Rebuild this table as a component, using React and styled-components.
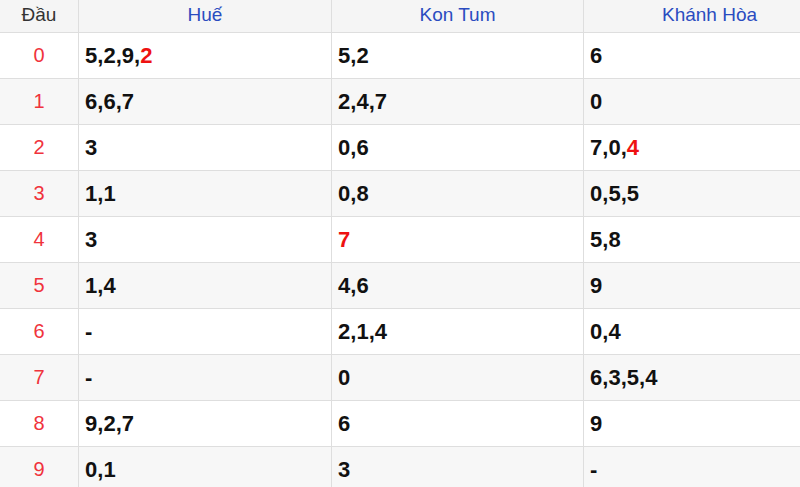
import React from "react";
import styled, { createGlobalStyle } from "styled-components";

// Loto heads per province: each cell is a list of tails, some marked red
const provinces = ["Huế", "Kon Tum", "Khánh Hòa"];

const rows = [
  [["5", "2", "9", "2*"], ["5", "2"], ["6"]],
  [["6", "6", "7"], ["2", "4", "7"], ["0"]],
  [["3"], ["0", "6"], ["7", "0", "4*"]],
  [["1", "1"], ["0", "8"], ["0", "5", "5"]],
  [["3"], ["7*"], ["5", "8"]],
  [["1", "4"], ["4", "6"], ["9"]],
  [[], ["2", "1", "4"], ["0", "4"]],
  [[], ["0"], ["6", "3", "5", "4"]],
  [["9", "2", "7"], ["6"], ["9"]],
  [["0", "1"], ["3"], []],
];

const GlobalStyle = createGlobalStyle`
  html, body {
    margin: 0;
    padding: 0;
    background: #fff;
    font-family: "Liberation Sans", Arial, sans-serif;
  }
`;

const Wrapper = styled.div`
  width: 800px;
  height: 487px;
  overflow: hidden;
`;

const Table = styled.table`
  border-collapse: separate;
  border-spacing: 0;
  table-layout: fixed;
  width: 836px;
`;

const HeadRow = styled.tr`
  height: 33px;
  background: #f5f5f5;
`;

const HeadCell = styled.th`
  padding: 0 0 2px;
  font-size: 19px;
  font-weight: normal;
  text-align: center;
  color: ${(p) => (p.$plain ? "#333" : "#2a4cc0")};
  border-bottom: 1px solid #dedede;
  border-right: 1px solid #dedede;
  vertical-align: middle;
`;

const Row = styled.tr`
  height: 46px;
  background: ${(p) => (p.$odd ? "#f7f7f7" : "#ffffff")};
`;

const HeadNum = styled.td`
  padding: 0;
  text-align: center;
  font-size: 20px;
  color: #f0333c;
  border-bottom: 1px solid #dedede;
  border-right: 1px solid #dedede;
  vertical-align: middle;
`;

const Cell = styled.td`
  padding: 0 0 0 6px;
  font-size: 22px;
  font-weight: bold;
  color: #111;
  border-bottom: 1px solid #dedede;
  border-right: 1px solid #dedede;
  vertical-align: middle;
`;

const Hit = styled.span`
  color: #ee1111;
`;

const Tails = ({ list }) => {
  if (!list.length) return "-";
  return list.map((t, i) => (
    <React.Fragment key={i}>
      {i > 0 && ","}
      {t.endsWith("*") ? <Hit>{t.slice(0, -1)}</Hit> : t}
    </React.Fragment>
  ));
};

export default function App() {
  return (
    <Wrapper>
      <GlobalStyle />
      <Table>
        <colgroup>
          <col style={{ width: 79 }} />
          <col style={{ width: 253 }} />
          <col style={{ width: 252 }} />
          <col style={{ width: 252 }} />
        </colgroup>
        <thead>
          <HeadRow>
            <HeadCell $plain>Đầu</HeadCell>
            {provinces.map((p) => (
              <HeadCell key={p}>{p}</HeadCell>
            ))}
          </HeadRow>
        </thead>
        <tbody>
          {rows.map((r, i) => (
            <Row key={i} $odd={i % 2 === 1}>
              <HeadNum>{i}</HeadNum>
              {r.map((list, j) => (
                <Cell key={j}>
                  <Tails list={list} />
                </Cell>
              ))}
            </Row>
          ))}
        </tbody>
      </Table>
    </Wrapper>
  );
}
